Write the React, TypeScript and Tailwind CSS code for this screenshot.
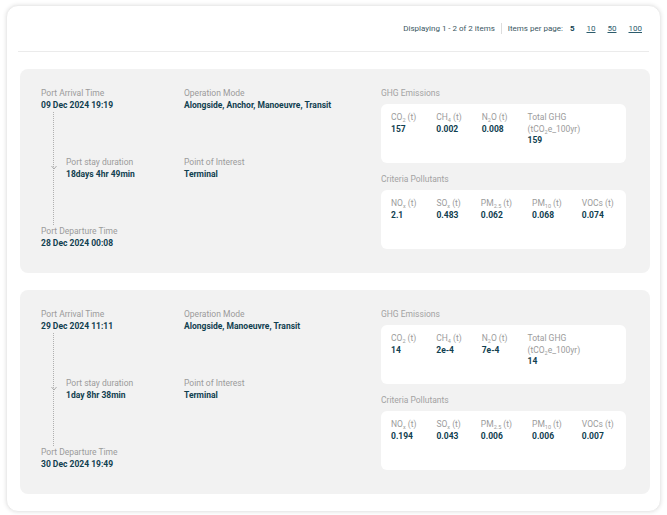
import type { ReactNode } from 'react'

type Metric = { label: ReactNode; value: string; sub?: ReactNode }

type Visit = {
  arrival: string
  departure: string
  duration: string
  mode: string
  poi: string
  ghg: Metric[]
  criteria: Metric[]
}

const S = ({ children }: { children: ReactNode }) => (
  <sub className="text-[5.5px] align-[-1px] leading-none">{children}</sub>
)

const visits: Visit[] = [
  {
    arrival: '09 Dec 2024 19:19',
    departure: '28 Dec 2024 00:08',
    duration: '18days 4hr 49min',
    mode: 'Alongside, Anchor, Manoeuvre, Transit',
    poi: 'Terminal',
    ghg: [
      { label: <>CO<S>2</S> (t)</>, value: '157' },
      { label: <>CH<S>4</S> (t)</>, value: '0.002' },
      { label: <>N<S>2</S>O (t)</>, value: '0.008' },
      { label: 'Total GHG', sub: <>(tCO<S>2</S>e_100yr)</>, value: '159' },
    ],
    criteria: [
      { label: <>NO<S>x</S> (t)</>, value: '2.1' },
      { label: <>SO<S>x</S> (t)</>, value: '0.483' },
      { label: <>PM<S>2.5</S> (t)</>, value: '0.062' },
      { label: <>PM<S>10</S> (t)</>, value: '0.068' },
      { label: 'VOCs (t)', value: '0.074' },
    ],
  },
  {
    arrival: '29 Dec 2024 11:11',
    departure: '30 Dec 2024 19:49',
    duration: '1day 8hr 38min',
    mode: 'Alongside, Manoeuvre, Transit',
    poi: 'Terminal',
    ghg: [
      { label: <>CO<S>2</S> (t)</>, value: '14' },
      { label: <>CH<S>4</S> (t)</>, value: '2e-4' },
      { label: <>N<S>2</S>O (t)</>, value: '7e-4' },
      { label: 'Total GHG', sub: <>(tCO<S>2</S>e_100yr)</>, value: '14' },
    ],
    criteria: [
      { label: <>NO<S>x</S> (t)</>, value: '0.194' },
      { label: <>SO<S>x</S> (t)</>, value: '0.043' },
      { label: <>PM<S>2.5</S> (t)</>, value: '0.006' },
      { label: <>PM<S>10</S> (t)</>, value: '0.006' },
      { label: 'VOCs (t)', value: '0.007' },
    ],
  },
]

function Field({ label, value }: { label: string; value: string }) {
  return (
    <div className="leading-[12px]">
      <div className="text-[#9b9b9b]">{label}</div>
      <div className="font-bold text-[#10404f]">{value}</div>
    </div>
  )
}

function MetricBox({ title, items }: { title: string; items: Metric[] }) {
  return (
    <div>
      <div className="leading-[12px] text-[#a3a3a3]">{title}</div>
      <div className="mt-[5px] flex h-[59px] gap-[20px] rounded-md bg-white px-[10px] pt-[8px]">
        {items.map((m, i) => (
          <div key={i} className="leading-[11.5px]">
            <div className="text-[#9b9b9b]">{m.label}</div>
            {m.sub && <div className="text-[#9b9b9b]">{m.sub}</div>}
            <div className="font-bold text-[#10404f]">{m.value}</div>
          </div>
        ))}
      </div>
    </div>
  )
}

function VisitCard({ v }: { v: Visit }) {
  return (
    <div className="flex rounded-lg bg-[#f2f2f2] pl-[21px] pr-[24px] pt-[18px] pb-[24px]">
      <div className="grid w-[340px] grid-cols-[143px_1fr] grid-rows-[auto_113px_auto]">
        <Field label="Port Arrival Time" value={v.arrival} />
        <Field label="Operation Mode" value={v.mode} />
        <div className="flex items-center">
          <div className="relative flex h-full w-[25px] justify-center">
            <div className="h-full border-l border-dotted border-[#b0b0b0]" />
            <svg
              className="absolute top-1/2 -mt-[3px]"
              width="6"
              height="5"
              viewBox="0 0 6 5"
            >
              <path d="M0.5 1 L3 4 L5.5 1" fill="none" stroke="#a5a5a5" strokeWidth="0.9" />
            </svg>
          </div>
          <Field label="Port stay duration" value={v.duration} />
        </div>
        <div className="flex items-center">
          <Field label="Point of Interest" value={v.poi} />
        </div>
        <Field label="Port Departure Time" value={v.departure} />
      </div>
      <div className="flex w-[245px] flex-col gap-[10px]">
        <MetricBox title="GHG Emissions" items={v.ghg} />
        <MetricBox title="Criteria Pollutants" items={v.criteria} />
      </div>
    </div>
  )
}

export default function App() {
  return (
    <div
      className="min-h-screen bg-white p-[5px] pl-[6px] text-[8.5px]"
      style={{ fontFamily: 'Roboto, "Liberation Sans", sans-serif' }}
    >
      <div className="w-[655px] rounded-xl border border-[#ececec] bg-white shadow-[0_0_4px_rgba(0,0,0,0.12)]">
        <div className="mx-[11px] flex h-[46px] items-center justify-end border-b border-[#ebebeb] pr-[7px] text-[8px] text-[#3a5762]">
          <span>Displaying 1 - 2 of 2 items</span>
          <span className="mx-[6px] h-[11px] border-l border-[#dddddd]" />
          <span>Items per page:</span>
          <span className="ml-[7px] font-bold text-[#10404f]">5</span>
          <span className="ml-[12px] underline text-[#2d5c6c]">10</span>
          <span className="ml-[12px] underline text-[#2d5c6c]">50</span>
          <span className="ml-[12px] underline text-[#2d5c6c]">100</span>
        </div>
        <div className="ml-[13px] mr-[10px] flex flex-col gap-[17px] py-[17px]">
          {visits.map((v, i) => (
            <VisitCard key={i} v={v} />
          ))}
        </div>
      </div>
    </div>
  )
}
